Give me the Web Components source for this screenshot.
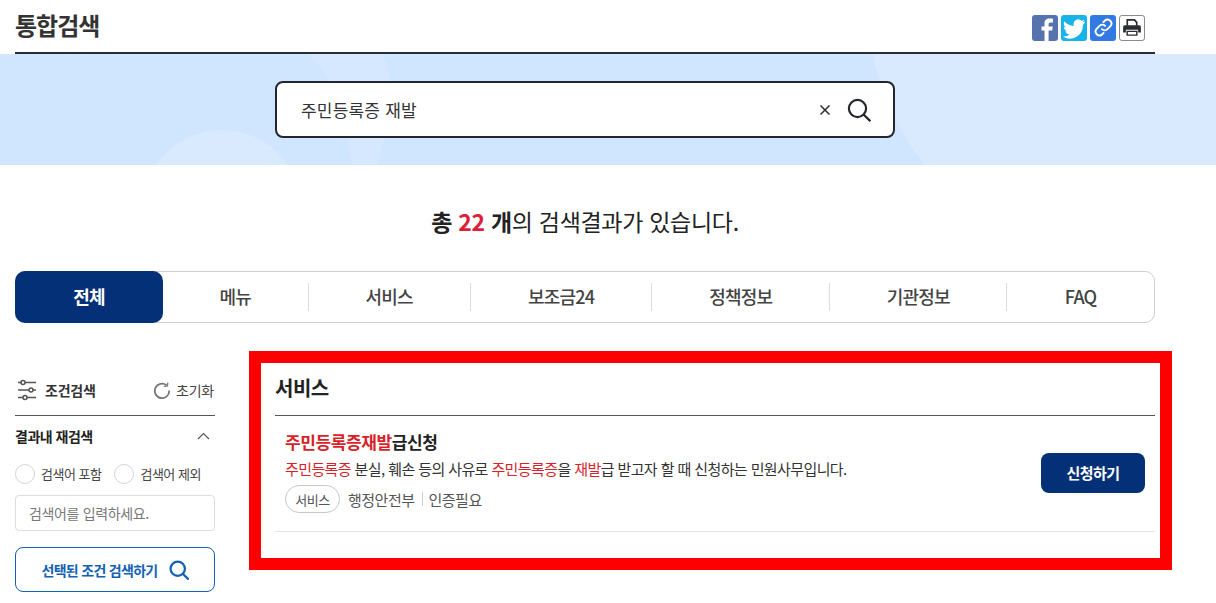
<!DOCTYPE html>
<html lang="ko">
<head>
<meta charset="utf-8">
<title>통합검색</title>
<style>
  html,body{margin:0;padding:0;background:#fff;overflow:hidden;height:603px;}
  body{font-family:"Noto Sans CJK KR","Noto Sans",sans-serif;color:#222;position:relative;}
</style>
</head>
<body>
<page-header></page-header>
<search-band></search-band>
<result-count></result-count>
<tab-bar></tab-bar>
<div style="display:flex;gap:60px;padding:0 61px 0 15px;margin-top:28px">
  <filter-panel></filter-panel>
  <service-results></service-results>
</div>
<script>
const searchIcon=(size,color,sw)=>`<svg width="${size}" height="${size}" viewBox="0 0 24 24" fill="none" stroke="${color}" stroke-width="${sw}"><circle cx="10.5" cy="10.5" r="8.6"/><path d="M16.8 16.8l6 5.8" stroke-linecap="round"/></svg>`;

class PageHeader extends HTMLElement{
    constructor(){
        super()
        this.attachShadow({mode:'open'});
        this.shadowRoot.innerHTML=`
        <style>
          :host{display:flex;justify-content:space-between;align-items:center;height:52px;margin:0 61px 0 15px;border-bottom:2px solid #2b2d33;}
          h1{margin:0;font-size:24px;font-weight:700;color:#333;letter-spacing:-1px;line-height:52px;position:relative;top:-1px}
          .share{display:flex;gap:3px;margin:3px 10px 0 0}
          .b{width:26px;height:26px;border-radius:3px;overflow:hidden;display:flex;align-items:center;justify-content:center}
          .p{box-sizing:border-box;border:1px solid #8b8b8b;background:#fff}
        </style>
        <h1>통합검색</h1>
        <div class="share">
          <div class="b" style="background:#5673ae"><svg width="26" height="26" viewBox="0 0 26 26"><path fill="#fff" transform="translate(2 0)" d="M10.500 26V15.500H7.500v-4h3V8.400C10.500 5 12.600 3.500 15.300 3.500c1.700 0 3.200.1 3.700.2v3.700h-2.300c-1.700 0-2.100.9-2.100 2v2.100h4.200l-.6 4h-3.600V26z"/></svg></div>
          <div class="b" style="background:#18b4e9"><svg width="24" height="24" viewBox="0 0 24 24"><path fill="#fff" d="M23 5.500c-.8.400-1.700.6-2.600.7.900-.6 1.700-1.400 2-2.500-.9.500-1.900.9-2.900 1.100A4.600 4.600 0 0 0 11.700 9c0 .4 0 .7.100 1C8 9.800 4.600 8 2.400 5.200c-1.200 2.100-.6 4.700 1.400 6.100-.7 0-1.400-.2-2-.6 0 2.200 1.500 4.100 3.600 4.500-.7.200-1.400.2-2.100.1.600 1.800 2.300 3.100 4.300 3.200A9.300 9.300 0 0 1 .8 20.400 13 13 0 0 0 20.900 8.800c.9-.7 1.600-1.500 2.100-3.300z"/></svg></div>
          <div class="b" style="background:#3279e2"><svg width="19" height="19" viewBox="0 0 24 24" fill="none" stroke="#fff" stroke-width="2.400" stroke-linecap="round"><path d="M10 14a5 5 0 0 0 7 0l4-4a5 5 0 0 0-7-7l-2 2"/><path d="M14 10a5 5 0 0 0-7 0l-4 4a5 5 0 0 0 7 7l2-2"/></svg></div>
          <div class="b p"><svg width="20" height="20" viewBox="0 0 18 18"><path fill="#2b2d33" d="M4 1h7.500L14 3.500V7h-1.500V4.200L10.800 2.500H5.500V7H4z"/><path fill="#2b2d33" d="M2.500 6.500h13A1.500 1.500 0 0 1 17 8v5h-2.500v-2.500h-11V13H1V8a1.500 1.500 0 0 1 1.500-1.500z"/><path fill="#2b2d33" d="M4 11.500h10V16H4zm1.300 1.200v2.100h7.400v-2.100z"/></svg></div>
        </div>`;
    }
}
customElements.define('page-header',PageHeader);

class SearchBand extends HTMLElement{
    constructor(){
        super()
        this.attachShadow({mode:'open'});
        this.shadowRoot.innerHTML=`
        <style>
          :host{display:flex;justify-content:center;height:111px;background:#d0e5fe;position:relative;overflow:hidden;padding-right:46px;box-sizing:border-box}
          .bg{position:absolute;left:0;top:0}
          .box{position:relative;box-sizing:border-box;width:620px;height:57px;margin-top:27px;background:#fff;border:2px solid #23262d;border-radius:8px;display:flex;align-items:center;padding:0 22px 0 24px;}
          .q{flex:1;font-size:17px;color:#333;letter-spacing:.2px}
          .x{width:12px;height:12px;margin-right:16px;display:block}
        </style>
        <svg class="bg" width="1216" height="111"><circle cx="222" cy="156" r="80" fill="#d9eaff"/><path d="M873 0C880 40 900 80 925 111H1216V0z" fill="#d9eaff"/><path d="M307 0C330 16 345 56 352 111H377C392 66 395 31 383 0z" fill="#d6e8ff"/></svg>
        <div class="box">
          <span class="q">주민등록증 재발</span>
          <svg class="x" viewBox="0 0 12 12" stroke="#2b2d33" stroke-width="1.500"><path d="M1.500 1.500l9 9M10.500 1.500l-9 9"/></svg>
          ${searchIcon(24,'#23262d',2.2)}
        </div>`;
    }
}
customElements.define('search-band',SearchBand);

class ResultCount extends HTMLElement{
    constructor(){
        super()
        this.attachShadow({mode:'open'});
        this.shadowRoot.innerHTML=`
        <style>
          :host{display:block;height:106px;margin-right:61px;padding-left:15px;text-align:center;font-size:23px;line-height:112px;letter-spacing:-.3px;color:#222}
          b{font-weight:700} em{font-style:normal;font-weight:700;color:#de1f3a}
        </style>
        <b>총 <em>22</em> 개</b>의 검색결과가 있습니다.`;
    }
}
customElements.define('result-count',ResultCount);

class TabBar extends HTMLElement{
    constructor(){
        super()
        this.attachShadow({mode:'open'});
        const tabs=[['메뉴',146],['서비스',162],['보조금24',182],['정책정보',178],['기관정보',177],['FAQ',147]];
        this.shadowRoot.innerHTML=`
        <style>
          :host{display:flex;box-sizing:border-box;height:52px;margin:0 61px 0 15px;border:1px solid #cfcfcf;border-radius:10px;align-items:center;font-size:18px;font-weight:500;letter-spacing:-.8px;color:#444}
          .on{box-sizing:border-box;width:148px;height:52px;margin:-1px 0 -1px -1px;padding-bottom:2px;background:#033076;color:#fff;border-radius:10px;display:flex;align-items:center;justify-content:center;font-weight:700}
          .t{box-sizing:border-box;height:28px;padding-bottom:2px;display:flex;align-items:center;justify-content:center;border-right:1px solid #ddd}
          .t:last-child{border-right:0}
        </style>
        <div class="on">전체</div>
        ${tabs.map(t=>`<div class="t" style="width:${t[1]}px">${t[0]}</div>`).join('')}`;
    }
}
customElements.define('tab-bar',TabBar);

class FilterPanel extends HTMLElement{
    constructor(){
        super()
        this.attachShadow({mode:'open'});
        this.shadowRoot.innerHTML=`
        <style>
          :host{display:block;flex:0 0 200px;width:200px;color:#333;letter-spacing:-.5px}
          .top{display:flex;align-items:center;height:65px;padding-top:14px;border-bottom:1px solid #555;box-sizing:border-box;font-size:14px}
          .top svg{display:block}
          .top b{margin-left:6px;font-weight:700;color:#333;letter-spacing:-.2px}
          .reset{margin-left:auto;display:flex;align-items:center;gap:5px;font-size:14px;letter-spacing:-.2px;color:#444;margin-right:1px}
          .sub{display:flex;justify-content:space-between;align-items:center;height:40px;font-size:14px;font-weight:700;color:#222}
          .radios{display:flex;align-items:center;height:29px;margin-top:3px;font-size:13px;color:#444;}
          .r{width:18px;height:18px;border:1px solid #d5d5d5;border-radius:50%;margin-right:6px;flex:none;background:#fff}
          .radios span+.r{margin-left:13px}
          .input{box-sizing:border-box;height:36px;margin-top:7px;border:1px solid #ddd;border-radius:4px;padding:0 13px;display:flex;align-items:center;font-size:14px;color:#777;letter-spacing:-.35px}
          .go{box-sizing:border-box;height:45px;margin-top:16px;border:1px solid #1261b5;border-radius:8px;display:flex;align-items:center;justify-content:center;gap:11px;font-size:14px;letter-spacing:-.7px;font-weight:700;color:#1261b5}
        </style>
        <div class="top">
          <svg width="24" height="24" viewBox="0 0 24 24" fill="#fff" stroke="#555" stroke-width="1.500"><path d="M3 4.500h18M3 12h18M3 19.500h18"/><circle cx="8" cy="4.500" r="2"/><circle cx="16" cy="12" r="2"/><circle cx="10" cy="19.500" r="2"/></svg>
          <b>조건검색</b>
          <span class="reset"><svg width="18" height="18" viewBox="0 0 18 18" fill="none" stroke="#777" stroke-width="1.800"><path d="M13.500 4.300A7.200 7.200 0 1 0 16.200 9.500"/><path d="M10.800 5.300l3.600-.3.400-3.400" stroke-width="1.300"/></svg>초기화</span>
        </div>
        <div class="sub">결과내 재검색<svg style="margin-right:5px" width="13" height="8" viewBox="0 0 13 8" fill="none" stroke="#555" stroke-width="1.200"><path d="M1 7l5.500-5.500L12 7"/></svg></div>
        <div class="radios"><div class="r"></div><span>검색어 포함</span><div class="r"></div><span>검색어 제외</span></div>
        <div class="input">검색어를 입력하세요.</div>
        <div class="go">선택된 조건 검색하기${searchIcon(20,'#1261b5',2.700)}</div>`;
    }
}
customElements.define('filter-panel',FilterPanel);

class ServiceResults extends HTMLElement{
    constructor(){
        super()
        this.attachShadow({mode:'open'});
        this.shadowRoot.innerHTML=`
        <style>
          :host{display:block;flex:1;position:relative;letter-spacing:-.5px}
          .frame{position:absolute;left:-26px;right:-17px;top:0;height:219px;box-sizing:border-box;border:12px solid #fe0000;pointer-events:none}
          h2{margin:0;box-sizing:border-box;height:65px;border-bottom:1px solid #555;font-size:20px;font-weight:700;line-height:74px;color:#222}
          .row{display:flex;align-items:center;justify-content:space-between;height:116px;padding:0 10px 4px;border-bottom:1px solid #e3e3e3;box-sizing:border-box}
          .title{font-size:17px;letter-spacing:-.4px;font-weight:700;line-height:24px;color:#222}
          .hl{color:#d81f2a}
          .desc{font-size:15px;letter-spacing:-.6px;line-height:22px;margin-top:4px;color:#333}
          .meta{display:flex;align-items:center;margin-top:5px;font-size:15px;color:#555}
          .tag{box-sizing:border-box;height:28px;width:55px;border:1px solid #c8c8c8;border-radius:14px;display:flex;align-items:center;justify-content:center;font-size:13px;margin-right:8px}
          .meta i{width:1px;height:14px;background:#ccc;margin:0 6px 0 7px}
          .btn{width:104px;height:40px;margin-top:2px;background:#033076;color:#fff;border-radius:8px;display:flex;align-items:center;justify-content:center;font-size:15px;font-weight:700}
        </style>
        <h2>서비스</h2>
        <div class="row">
          <div>
            <div class="title"><span class="hl">주민등록증재발</span>급신청</div>
            <div class="desc"><span class="hl">주민등록증</span> 분실, 훼손 등의 사유로 <span class="hl">주민등록증</span>을 <span class="hl">재발</span>급 받고자 할 때 신청하는 민원사무입니다.</div>
            <div class="meta"><span class="tag">서비스</span>행정안전부<i></i>인증필요</div>
          </div>
          <div class="btn">신청하기</div>
        </div>
        <div class="frame"></div>`;
    }
}
customElements.define('service-results',ServiceResults);
</script>
</body>
</html>
